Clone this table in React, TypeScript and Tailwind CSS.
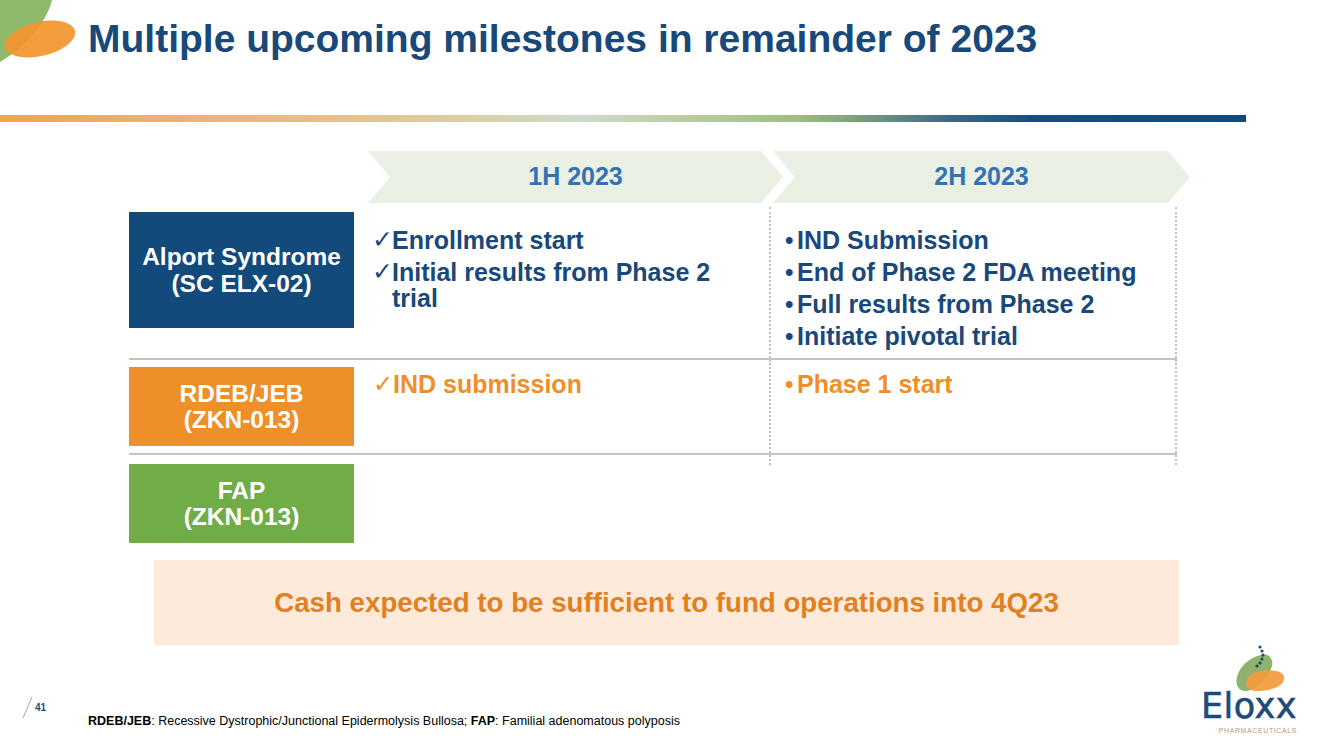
import React from "react";

const NAVY = "text-[#18497a]";

function CornerMark() {
  return (
    <svg width="88" height="70" viewBox="0 0 88 70" className="shrink-0">
      <path d="M0 0 L52 0 C48 18 30 44 0 62 Z" fill="#8fb96b" />
      <ellipse cx="40" cy="39" rx="36" ry="17" transform="rotate(-13 40 39)" fill="#f3952f" opacity="0.93" />
    </svg>
  );
}

function EloxxLogo() {
  return (
    <div className="flex flex-col items-end pr-[36px]">
      <svg width="60" height="48" viewBox="0 0 60 48" className="mr-[6px]">
        <path d="M30 10 C38 8 44 14 40 24 C36 34 26 44 16 46 C8 47 4 40 6 32 C9 20 20 12 30 10 Z" fill="#8fb36e" />
        <path d="M16 34 C20 26 34 24 44 26 C52 27 55 31 52 37 C49 43 36 46 26 46 C18 46 13 41 16 34 Z" fill="#f29a3c" opacity="0.92" />
        {[
          [29, 2],
          [31, 6],
          [32, 10],
          [31, 14],
          [29, 18],
          [26, 21],
        ].map(([cx, cy], i) => (
          <circle key={i} cx={cx} cy={cy} r="1.6" fill="#1d4a78" />
        ))}
      </svg>
      <div className="font-['DejaVu_Sans',sans-serif] text-[35px] leading-none text-[#1d4a78] -mt-[4px] tracking-[0.5px] [-webkit-text-stroke:0.6px_#1d4a78]">Eloxx</div>
      <div className="text-[7px] leading-none tracking-[0.6px] text-[#b49c7c] mt-[3px]">PHARMACEUTICALS</div>
    </div>
  );
}

function Check({ className }: { className: string }) {
  return <span className={`w-[20px] shrink-0 font-['DejaVu_Sans',sans-serif] leading-[26px] ${className}`}>✓</span>;
}

function Bullet({ className }: { className: string }) {
  return <span className={`w-[12px] shrink-0 text-[24px] leading-[26px] ${className}`}>•</span>;
}

export default function App() {
  const col1Row1 = ["Enrollment start", "Initial results from Phase 2 trial"];
  const col2Row1 = ["IND Submission", "End of Phase 2 FDA meeting", "Full results from Phase 2", "Initiate pivotal trial"];

  return (
    <div className="w-[1333px] h-[749px] overflow-hidden bg-white font-['Liberation_Sans',Arial,sans-serif]">
      {/* Title */}
      <header className="flex items-start h-[70px]">
        <CornerMark />
        <h1 className={`mt-[16px] text-[39px] leading-[46px] font-bold ${NAVY}`}>Multiple upcoming milestones in remainder of 2023</h1>
      </header>

      <div className="mt-[45px] w-[1246px] h-[7px] bg-[linear-gradient(90deg,#f6a24c_0%,#e8bd86_24%,#dacfa8_38%,#cadcc7_47%,#b4cc9e_56%,#9dbf80_64%,#7a9e7a_69%,#3f6a84_76%,#164c7e_83%,#0f4a7e_100%)]" />

      {/* Period header */}
      <div className="mt-[29px] flex h-[52px]">
        <div className="ml-[368px] w-[415px] flex items-center justify-center bg-[#eaf0e3] [clip-path:polygon(0_0,calc(100%-22px)_0,100%_50%,calc(100%-22px)_100%,0_100%,22px_50%)]">
          <span className="text-[25px] font-bold text-[#3273b5]">1H 2023</span>
        </div>
        <div className="-ml-[10px] w-[417px] flex items-center justify-center bg-[#eaf0e3] [clip-path:polygon(0_0,calc(100%-22px)_0,100%_50%,calc(100%-22px)_100%,0_100%,22px_50%)]">
          <span className="text-[25px] font-bold text-[#3273b5]">2H 2023</span>
        </div>
      </div>

      {/* Table */}
      <div className="mt-[4px] ml-[129px]">
        <div className="grid grid-cols-[225px_415px_408px] h-[151px]">
          <div className="pt-[5px]">
            <div className="h-[116px] bg-[#124a7b] flex flex-col items-center justify-center text-white font-bold text-[24.5px] leading-[27px] text-center">
              <span>Alport Syndrome</span>
              <span>(SC ELX-02)</span>
            </div>
          </div>
          <div className={`pt-[20px] pl-[18px] flex flex-col gap-[6px] text-[25px] font-bold ${NAVY}`}>
            {col1Row1.map((t) => (
              <div key={t} className="flex">
                <Check className={`${NAVY} text-[25px] font-normal`} />
                <span className="leading-[26px] pr-[40px]">{t}</span>
              </div>
            ))}
          </div>
          <div className={`border-x-2 border-dotted border-[#c2c2c2] pt-[20px] pl-[14px] flex flex-col gap-[6px] text-[25px] font-bold ${NAVY}`}>
            {col2Row1.map((t) => (
              <div key={t} className="flex">
                <Bullet className={NAVY} />
                <span className="leading-[26px]">{t}</span>
              </div>
            ))}
          </div>
        </div>
        <div className="h-[2px] w-[1048px] bg-[#c4c4c4]" />

        <div className="grid grid-cols-[225px_415px_408px] h-[93px]">
          <div className="pt-[7px]">
            <div className="h-[79px] bg-[#ef8f29] flex flex-col items-center justify-center text-white font-bold text-[24.5px] leading-[26px] text-center">
              <span>RDEB/JEB</span>
              <span>(ZKN-013)</span>
            </div>
          </div>
          <div className="pt-[11px] pl-[19px] flex text-[25px] font-bold text-[#ef8f2a]">
            <Check className="text-[#ef8f2a] text-[24px] font-bold w-[19px]" />
            <span className="leading-[26px]">IND submission</span>
          </div>
          <div className="border-x-2 border-dotted border-[#c2c2c2] pt-[11px] pl-[14px] flex text-[25px] font-bold text-[#ef8f2a]">
            <Bullet className="text-[#ef8f2a]" />
            <span className="leading-[26px]">Phase 1 start</span>
          </div>
        </div>
        <div className="h-[2px] w-[1048px] bg-[#c4c4c4]" />

        <div className="grid grid-cols-[225px_415px_408px]">
          <div className="pt-[9px]">
            <div className="h-[79px] bg-[#70ad47] flex flex-col items-center justify-center text-white font-bold text-[24.5px] leading-[26px] text-center">
              <span>FAP</span>
              <span>(ZKN-013)</span>
            </div>
          </div>
          <div />
          <div className="h-[10px] border-x-2 border-dotted border-[#c2c2c2]" />
        </div>
      </div>

      {/* Cash */}
      <div className="mt-[17px] ml-[154px] w-[1025px] h-[85px] bg-[#fdeadb] flex items-center justify-center">
        <span className="text-[27.7px] font-bold text-[#e2801f]">Cash expected to be sufficient to fund operations into 4Q23</span>
      </div>

      {/* Footer */}
      <div className="flex justify-between h-[104px]">
        <div className="flex flex-col pt-[52px]">
          <div className="flex items-center pl-[22px] h-[21px]">
            <svg width="11" height="21" viewBox="0 0 11 21">
              <line x1="10" y1="0" x2="1" y2="21" stroke="#a8a8a8" strokeWidth="1" />
            </svg>
            <span className="ml-[2px] text-[10px] font-bold text-[#1f4e79]">41</span>
          </div>
          <div className="pl-[88px] -mt-[4px] text-[12.5px] leading-[15px] text-black">
            <b>RDEB/JEB</b>: Recessive Dystrophic/Junctional Epidermolysis Bullosa; <b>FAP</b>: Familial adenomatous polyposis
          </div>
        </div>
        <EloxxLogo />
      </div>
    </div>
  );
}
